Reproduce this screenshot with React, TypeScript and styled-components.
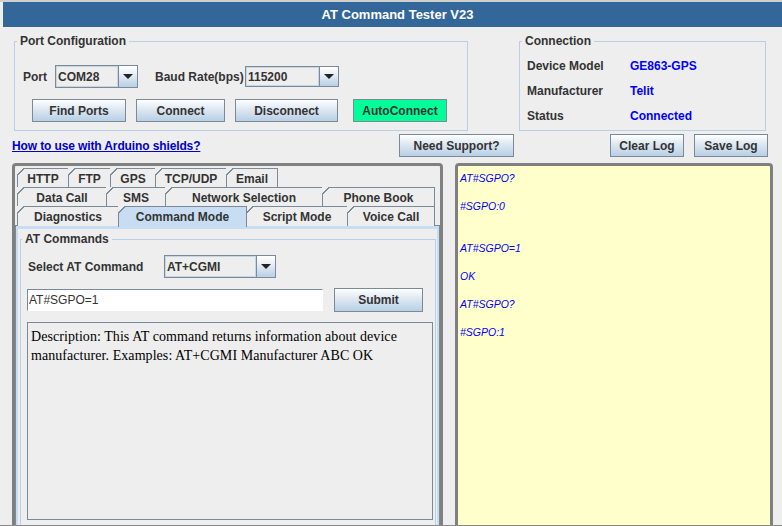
import React from "react";
import styled, { createGlobalStyle } from "styled-components";

const Global = createGlobalStyle`
  html, body { margin: 0; padding: 0; background: #eeeeee; }
  body { font-family: "Liberation Sans", Arial, sans-serif; font-size: 12px; color: #333333; }
  * { box-sizing: border-box; }
`;

const Page = styled.div`
  width: 782px;
  height: 526px;
  overflow: hidden;
  display: flex;
  flex-direction: column;
  background: #eeeeee;
  border-top: 2px solid #cfcfcf;
  border-bottom: 1px solid #8a8a8a;
`;

const TitleBar = styled.div`
  flex: none;
  height: 25px;
  margin-left: 3px;
  padding-left: 10px;
  background: #336699;
  color: #ffffff;
  font-weight: bold;
  font-size: 13px;
  display: flex;
  align-items: center;
  justify-content: center;
`;

const TopRow = styled.div`
  flex: none;
  display: flex;
  margin: 7px 16px 0 14px;
  justify-content: space-between;
`;

const Group = styled.fieldset<{ $w?: number; $h?: number }>`
  margin: 0;
  padding: 0;
  min-width: 0;
  width: ${(p) => (p.$w ? `${p.$w}px` : "auto")};
  height: ${(p) => (p.$h ? `${p.$h}px` : "auto")};
  border: 1px solid #b8cfe5;
`;

const Legend = styled.legend<{ $inset?: number }>`
  margin-left: ${(p) => p.$inset ?? 2}px;
  padding: 0 3px;
  font-weight: bold;
  font-size: 12px;
  line-height: 14px;
  color: #333333;
`;

const PortBody = styled.div`
  display: flex;
  flex-direction: column;
  gap: 11px;
  padding: 17px 0 0 8px;
`;

const Row = styled.div`
  display: flex;
  align-items: center;
`;

const Label = styled.span<{ $w?: number; $pl?: number }>`
  font-weight: bold;
  white-space: nowrap;
  color: #333333;
  width: ${(p) => (p.$w ? `${p.$w}px` : "auto")};
  padding-left: ${(p) => p.$pl ?? 0}px;
  flex: none;
`;

const Combo = styled.div<{ $w: number; $h: number }>`
  flex: none;
  width: ${(p) => p.$w}px;
  height: ${(p) => p.$h}px;
  border: 1px solid #7a8a99;
  display: flex;
  background: #eeeeee;
`;

const ComboValue = styled.div`
  flex: 1;
  border: 1px solid #c8d6e4;
  padding-left: 1px;
  font-weight: bold;
  display: flex;
  align-items: center;
  color: #333333;
`;

const ComboArrow = styled.div`
  flex: none;
  width: 19px;
  border-left: 1px solid #7a8a99;
  background: linear-gradient(#ffffff, #eef3f8 30%, #b8cfe5);
  display: flex;
  align-items: center;
  justify-content: center;
  &::after {
    content: "";
    border-left: 5px solid transparent;
    border-right: 5px solid transparent;
    border-top: 5px solid #222222;
  }
`;

const Button = styled.button<{ $w: number; $h?: number; $accent?: boolean }>`
  flex: none;
  width: ${(p) => p.$w}px;
  height: ${(p) => p.$h ?? 23}px;
  padding: 0;
  border: 1px solid #7a8a99;
  border-radius: 0;
  background: ${(p) =>
    p.$accent ? "#00ff99" : "linear-gradient(#ffffff, #e4ecf4 35%, #b8cfe5)"};
  color: #333333;
  font: bold 12px "Liberation Sans", Arial, sans-serif;
`;

const ButtonRow = styled.div`
  display: flex;
  padding-left: 9px;
`;

const Spaced = styled.div<{ $ml: number }>`
  margin-left: ${(p) => p.$ml}px;
  display: flex;
  flex: none;
`;

const InfoGrid = styled.div`
  display: grid;
  grid-template-columns: 103px 1fr;
  grid-auto-rows: 25px;
  align-items: center;
  padding: 5px 0 0 7px;
`;

const InfoValue = styled.span`
  font-weight: bold;
  color: #0000ff;
`;

const ActionRow = styled.div`
  flex: none;
  display: flex;
  align-items: center;
  margin: 3px 14px 0 12px;
  height: 23px;
`;

const HelpLink = styled.a`
  font-weight: bold;
  color: #0000cc;
  text-decoration: underline;
  letter-spacing: -0.12px;
  width: 387px;
  flex: none;
`;

const LogActions = styled.div`
  margin-left: auto;
  display: flex;
  gap: 10px;
`;

const Main = styled.div`
  flex: 1;
  min-height: 0;
  display: flex;
  gap: 12px;
  margin: 6px 9px 0 12px;
`;

const Panel = styled.div<{ $w: number; $bg?: string }>`
  flex: none;
  width: ${(p) => p.$w}px;
  height: 400px;
  border: 3px solid #808080;
  border-radius: 4px 4px 0 0;
  background: ${(p) => p.$bg ?? "#eeeeee"};
`;

const TabRows = styled.div`
  padding: 2px 0 0 2px;
  display: flex;
  flex-direction: column;
`;

const TabRow = styled.div`
  display: flex;
  height: 19px;
`;

const Tab = styled.div<{ $w: number; $active?: boolean }>`
  position: relative;
  flex: none;
  width: ${(p) => p.$w + 1}px;
  margin-right: -1px;
  height: ${(p) => (p.$active ? 21 : 20)}px;
  border: 1px solid #7a8a99;
  border-bottom: none;
  background: ${(p) => (p.$active ? "#c8ddf2" : "#eeeeee")};
  z-index: ${(p) => (p.$active ? 2 : 1)};
  font-weight: bold;
  color: #333333;
  display: flex;
  align-items: ${(p) => (p.$active ? "flex-start" : "center")};
  padding-top: ${(p) => (p.$active ? 3 : 0)}px;
  justify-content: center;
  &::before {
    content: "";
    position: absolute;
    top: -1px;
    left: -1px;
    width: 7px;
    height: 7px;
    background: linear-gradient(135deg, #eeeeee 45%, #7a8a99 45%, #7a8a99 58%, transparent 58%);
  }
`;

const TabPane = styled.div`
  position: relative;
  border: 1px solid #7a8a99;
  border-width: 1px 1px 0 1px;
  height: 320px;
  box-shadow: inset 0 3px 0 #c8ddf2, inset 2px 0 0 #c8ddf2, inset -2px 0 0 #c8ddf2;
  padding: 6px 3px 0 4px;
`;

const CommandBody = styled.div`
  display: flex;
  flex-direction: column;
  padding: 9px 2px 24px 6px;
`;

const InputRow = styled.div`
  display: flex;
  align-items: center;
  margin-top: 10px;
`;

const TextInput = styled.input`
  flex: none;
  width: 296px;
  height: 22px;
  border: 1px solid #7a8a99;
  border-right-color: #ffffff;
  border-bottom-color: #ffffff;
  background: #ffffff;
  padding: 0 1px;
  font: 12px "Liberation Sans", Arial, sans-serif;
  color: #333333;
  outline: none;
`;

const Description = styled.div`
  width: 406px;
  height: 198px;
  margin-top: 10px;
  border: 1px solid #7a8a99;
  padding: 4px 3px;
  font: 14px/19px "Liberation Serif", "Times New Roman", serif;
  letter-spacing: 0.06px;
  color: #000000;
`;

const Log = styled.div`
  padding: 5px 0 0 2px;
  font: italic 10.5px/14px "Liberation Sans", Arial, sans-serif;
  color: #0000ff;
  white-space: pre;
`;

const tabRows: { label: string; w: number; active?: boolean }[][] = [
  [
    { label: "HTTP", w: 51 },
    { label: "FTP", w: 42 },
    { label: "GPS", w: 45 },
    { label: "TCP/UDP", w: 71 },
    { label: "Email", w: 51 },
  ],
  [
    { label: "Data Call", w: 89 },
    { label: "SMS", w: 59 },
    { label: "Network Selection", w: 157 },
    { label: "Phone Book", w: 112 },
  ],
  [
    { label: "Diagnostics", w: 101 },
    { label: "Command Mode", w: 128, active: true },
    { label: "Script Mode", w: 101 },
    { label: "Voice Call", w: 87 },
  ],
];

const logText = `AT#SGPO?

#SGPO:0


AT#SGPO=1

OK

AT#SGPO?

#SGPO:1`;

export default function App() {
  return (
    <Page>
      <Global />
      <TitleBar>AT Command Tester V23</TitleBar>
      <TopRow>
        <Group $w={454} $h={97}>
          <Legend>Port Configuration</Legend>
          <PortBody>
            <Row>
              <Label $w={32}>Port</Label>
              <Combo $w={83} $h={23}>
                <ComboValue>COM28</ComboValue>
                <ComboArrow />
              </Combo>
              <Spaced $ml={17}>
                <Label $w={90}>Baud Rate(bps)</Label>
              </Spaced>
              <Combo $w={94} $h={21}>
                <ComboValue>115200</ComboValue>
                <ComboArrow />
              </Combo>
            </Row>
            <ButtonRow>
              <Button $w={94}>Find Ports</Button>
              <Spaced $ml={10}>
                <Button $w={89}>Connect</Button>
              </Spaced>
              <Spaced $ml={10}>
                <Button $w={103}>Disconnect</Button>
              </Spaced>
              <Spaced $ml={15}>
                <Button $w={94} $accent>
                  AutoConnect
                </Button>
              </Spaced>
            </ButtonRow>
          </PortBody>
        </Group>
        <Group $w={247} $h={97}>
          <Legend>Connection</Legend>
          <InfoGrid>
            <Label>Device Model</Label>
            <InfoValue>GE863-GPS</InfoValue>
            <Label>Manufacturer</Label>
            <InfoValue>Telit</InfoValue>
            <Label>Status</Label>
            <InfoValue>Connected</InfoValue>
          </InfoGrid>
        </Group>
      </TopRow>
      <ActionRow>
        <HelpLink>How to use with Arduino shields?</HelpLink>
        <Button $w={115}>Need Support?</Button>
        <LogActions>
          <Button $w={74}>Clear Log</Button>
          <Button $w={74}>Save Log</Button>
        </LogActions>
      </ActionRow>
      <Main>
        <Panel $w={431}>
          <TabRows>
            {tabRows.map((row, i) => (
              <TabRow key={i}>
                {row.map((t) => (
                  <Tab key={t.label} $w={t.w} $active={t.active}>
                    {t.label}
                  </Tab>
                ))}
              </TabRow>
            ))}
          </TabRows>
          <TabPane>
            <Group>
              <Legend $inset={1}>AT Commands</Legend>
              <CommandBody>
                <Row>
                  <Label $w={137} $pl={1}>
                    Select AT Command
                  </Label>
                  <Combo $w={112} $h={23}>
                    <ComboValue>AT+CGMI</ComboValue>
                    <ComboArrow />
                  </Combo>
                </Row>
                <InputRow>
                  <TextInput defaultValue="AT#SGPO=1" />
                  <Spaced $ml={11}>
                    <Button $w={89} $h={24}>
                      Submit
                    </Button>
                  </Spaced>
                </InputRow>
                <Description>
                  Description: This AT command returns information about device manufacturer.
                  Examples: AT+CGMI Manufacturer ABC OK
                </Description>
              </CommandBody>
            </Group>
          </TabPane>
        </Panel>
        <Panel $w={318} $bg="#ffffcc">
          <Log>{logText}</Log>
        </Panel>
      </Main>
    </Page>
  );
}
